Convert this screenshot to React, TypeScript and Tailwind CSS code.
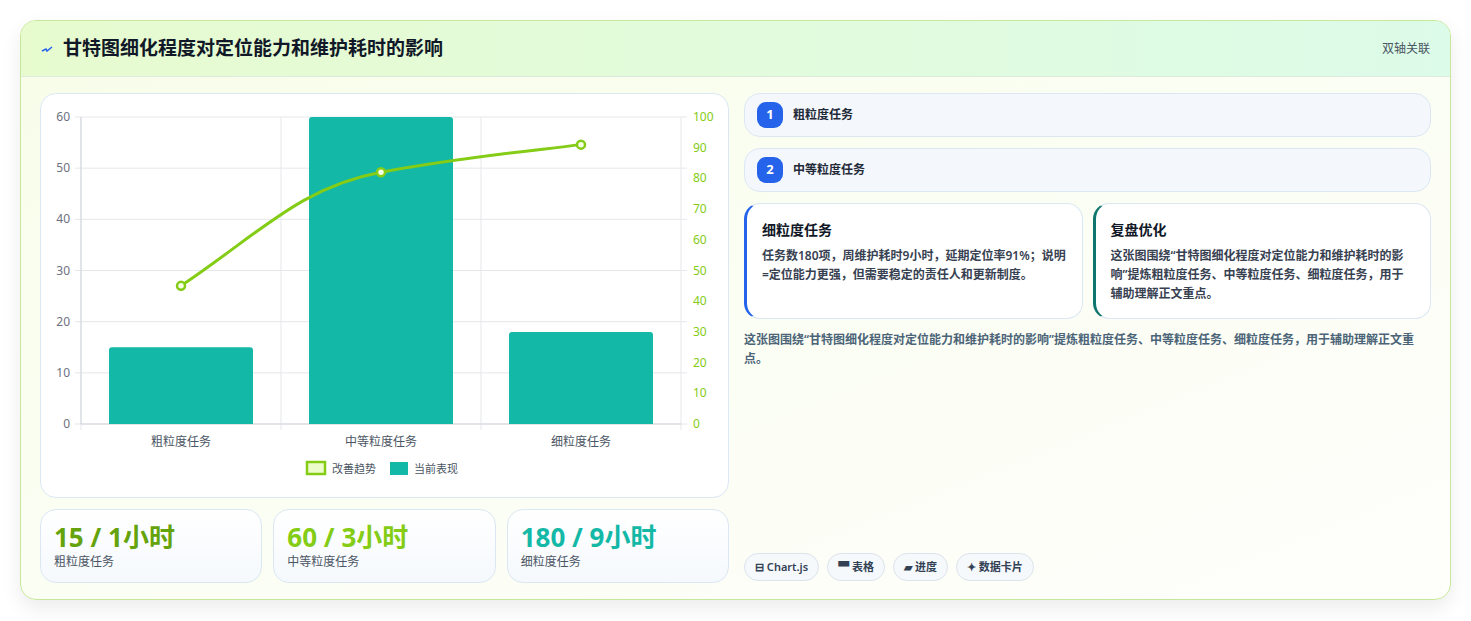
import React from "react";

const F = { fontFamily: '"Noto Sans", "Noto Sans CJK SC", sans-serif' };

function Chart() {
  const x0 = 80, x1 = 680, yb = 422, yt = 115, h = yb - yt;
  const yl = (v: number) => yb - (v / 60) * h;
  const yr = (v: number) => yb - (v / 100) * h;
  const bars = [15, 60, 18];
  const line = [45, 82, 91];
  const cx = [180, 380, 580];
  const pts = line.map((v, i) => [cx[i], yr(v)]);
  return (
    <svg viewBox="40 92 688 404" width="688" height="404" className="block">
      {[0, 10, 20, 30, 40, 50, 60].map((v) => (
        <g key={v}>
          <line x1={x0 - 6} x2={x1 + 6} y1={yl(v)} y2={yl(v)} stroke="#e5e7eb" />
          <text x={69} y={yl(v) + 4} textAnchor="end" fontSize="12" fill="#6b7280">{v}</text>
        </g>
      ))}
      {[0, 10, 20, 30, 40, 50, 60, 70, 80, 90, 100].map((v) => (
        <text key={v} x={692} y={yr(v) + 4} fontSize="12" fill="#84cc16">{v}</text>
      ))}
      {[x0, 280, 480, x1].map((x) => (
        <line key={x} x1={x} x2={x} y1={yt} y2={yb + 6} stroke="#e5e7eb" />
      ))}
      <line x1={x0} x2={x0} y1={yt} y2={yb} stroke="#d1d5db" />
      <line x1={x0} x2={x1} y1={yb} y2={yb} stroke="#d1d5db" />
      {bars.map((v, i) => (
        <path key={i} d={`M${cx[i] - 72} ${yb} V${yl(v) + 3} q0 -3 3 -3 H${cx[i] + 69} q3 0 3 3 V${yb} Z`} fill="#14b8a6" />
      ))}
      <path d={`M${pts[0][0]} ${pts[0][1]} C 260 230, 300 185, ${pts[1][0]} ${pts[1][1]} S 520 150, ${pts[2][0]} ${pts[2][1]}`} fill="none" stroke="#84cc16" strokeWidth="3" />
      {pts.map(([x, y], i) => (
        <circle key={i} cx={x} cy={y} r="4" fill="#f7fee7" stroke="#84cc16" strokeWidth="2.5" />
      ))}
      {["粗粒度任务", "中等粒度任务", "细粒度任务"].map((t, i) => (
        <text key={t} x={cx[i]} y={444} textAnchor="middle" fontSize="12" fill="#4b5563">{t}</text>
      ))}
      <rect x={306} y={460} width={18} height={12} fill="#ecfccb" stroke="#84cc16" strokeWidth="2.5" />
      <text x={331} y={471} fontSize="11" fill="#4b5563">改善趋势</text>
      <rect x={389} y={460} width={18} height={13} fill="#14b8a6" />
      <text x={413} y={471} fontSize="11" fill="#4b5563">当前表现</text>
    </svg>
  );
}

function Stat({ v, l, c }: { v: string; l: string; c: string }) {
  return (
    <div className="flex-1 rounded-2xl border border-[#dbe7f3] bg-gradient-to-b from-white to-[#f5f9fd] px-[13px] pt-[10px] h-[74px]">
      <div className={`text-[26px] font-bold leading-[34px] ${c}`}>{v}</div>
      <div className="text-[12px] text-[#4b5563] leading-[16px]">{l}</div>
    </div>
  );
}

export default function App() {
  return (
    <div style={F} className="w-[1471px] h-[621px] bg-white pt-[20px] pl-[20px]">
      <div className="w-[1431px] h-[580px] rounded-2xl border border-[#c7e89a] bg-gradient-to-br from-[#f8fde9] via-[#fbfef3] to-[#fefefb] shadow-[0_8px_20px_rgba(0,0,0,0.08)] overflow-hidden">
        <div className="h-[56px] flex items-center justify-between px-[20px] bg-gradient-to-r from-[#e7fbcf] to-[#dcfbe8] border-b border-[#dfeadf]">
          <div className="flex items-center gap-[10px]">
            <svg width="12" height="10" viewBox="0 0 12 10"><path d="M1 7 L5 5 L6 7 L11 3" stroke="#2563eb" strokeWidth="1.5" fill="none" /></svg>
            <span className="text-[19px] font-bold text-[#111827]">甘特图细化程度对定位能力和维护耗时的影响</span>
          </div>
          <span className="text-[12px] text-[#4b5563]">双轴关联</span>
        </div>
        <div className="flex gap-[15px] px-[19px] pt-[16px]">
          <div className="w-[689px] flex flex-col gap-[11px]">
            <div className="rounded-2xl border border-[#dbe7f3] bg-white overflow-hidden h-[405px]">
              <Chart />
            </div>
            <div className="flex gap-[11px]">
              <Stat v="15 / 1小时" l="粗粒度任务" c="text-[#65a30d]" />
              <Stat v="60 / 3小时" l="中等粒度任务" c="text-[#84cc16]" />
              <Stat v="180 / 9小时" l="细粒度任务" c="text-[#14b8a6]" />
            </div>
          </div>
          <div className="w-[689px] flex flex-col h-[489px]">
            {["粗粒度任务", "中等粒度任务"].map((t, i) => (
              <div key={t} className="h-[44px] mb-[11px] rounded-2xl border border-[#dbe7f3] bg-[#f4f8fc] flex items-center gap-[10px] px-[12px]">
                <span className="w-[26px] h-[26px] rounded-[9px] bg-[#2563eb] text-white text-[13px] font-bold flex items-center justify-center">{i + 1}</span>
                <span className="text-[12px] font-semibold text-[#1f2937]">{t}</span>
              </div>
            ))}
            <div className="flex gap-[10px]">
              <div className="flex-1 h-[116px] rounded-2xl border border-[#dbe7f3] border-l-[3px] border-l-[#2563eb] bg-white px-[15px] pt-[15px]">
                <div className="text-[14px] font-bold text-[#111827] mb-[6px]">细粒度任务</div>
                <div className="text-[12px] font-semibold text-[#374151] leading-[19px]">任务数180项，周维护耗时9小时，延期定位率91%；说明=定位能力更强，但需要稳定的责任人和更新制度。</div>
              </div>
              <div className="flex-1 h-[116px] rounded-2xl border border-[#dbe7f3] border-l-[3px] border-l-[#0f766e] bg-white px-[15px] pt-[15px]">
                <div className="text-[14px] font-bold text-[#111827] mb-[6px]">复盘优化</div>
                <div className="text-[12px] font-semibold text-[#374151] leading-[19px]">这张图围绕“甘特图细化程度对定位能力和维护耗时的影响”提炼粗粒度任务、中等粒度任务、细粒度任务，用于辅助理解正文重点。</div>
              </div>
            </div>
            <div className="mt-[11px] text-[12px] font-semibold text-[#4b6478] leading-[19px]">这张图围绕“甘特图细化程度对定位能力和维护耗时的影响”提炼粗粒度任务、中等粒度任务、细粒度任务，用于辅助理解正文重点。</div>
            <div className="mt-auto flex gap-[8px] pb-[1px]">
              {["⊟ Chart.js", "▀ 表格", "▰ 进度", "✦ 数据卡片"].map((t) => (
                <span key={t} className="h-[28px] px-[10px] rounded-full border border-[#dbe3ec] bg-[#f6f9fc] text-[11px] font-semibold text-[#334155] flex items-center">{t}</span>
              ))}
            </div>
          </div>
        </div>
      </div>
    </div>
  );
}
